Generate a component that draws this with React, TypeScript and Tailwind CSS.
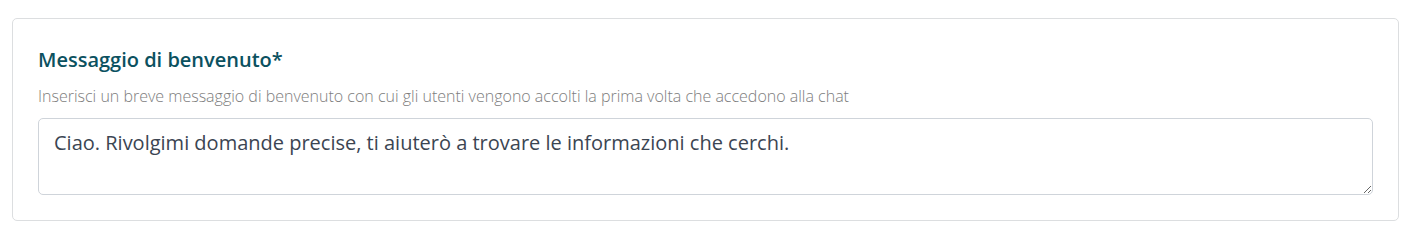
import React from "react";

export default function App() {
  return (
    <div className="w-[1411px] h-[237px] bg-white pt-[18px] pl-[12px] pr-[12px]" style={{ fontFamily: '"Open Sans", sans-serif' }}>
      <div className="border border-[#dcdee0] rounded-[5px] px-[25px] pt-[27px] pb-[25px]">
        <div className="text-[20px] leading-[28px] font-semibold text-[#0b5160]">Messaggio di benvenuto*</div>
        <div className="mt-[11px] text-[16px] leading-[22px] font-light text-[#7d7d7d]">
          Inserisci un breve messaggio di benvenuto con cui gli utenti vengono accolti la prima volta che accedono alla chat
        </div>
        <textarea
          className="mt-[11px] block w-full h-[77px] border border-[#cfd4da] rounded-[5px] px-[15px] py-[10px] text-[20px] leading-[28px] text-[#3b4552] outline-none"
          style={{ fontFamily: '"Open Sans", sans-serif' }}
          defaultValue="Ciao. Rivolgimi domande precise, ti aiuterò a trovare le informazioni che cerchi."
        />
      </div>
    </div>
  );
}
